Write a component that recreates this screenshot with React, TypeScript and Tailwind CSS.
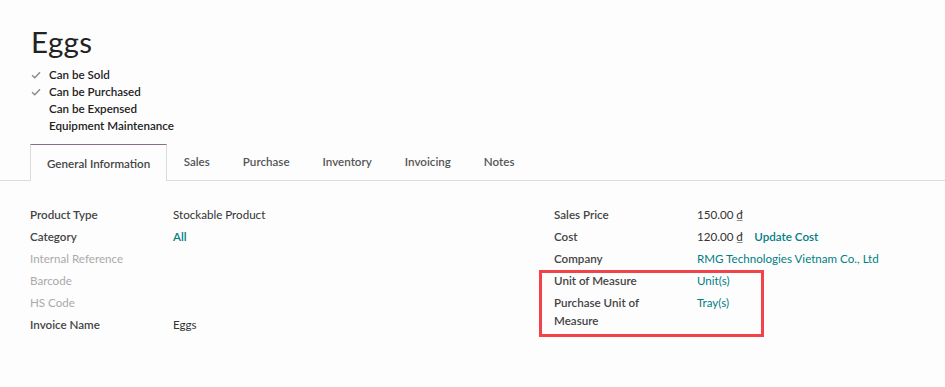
import React from "react";

const Check = () => (
  <svg width="10" height="8" viewBox="0 0 10 8" className="shrink-0">
    <path d="M1 4.2 L3.8 6.8 L9 1.2" fill="none" stroke="#8a8a8a" strokeWidth="1.4" />
  </svg>
);

const Row = ({ label, children, muted, tall }: { label: React.ReactNode; children?: React.ReactNode; muted?: boolean; tall?: boolean }) => (
  <div className={`flex ${tall ? "min-h-[40px]" : "h-[22px]"} items-start`}>
    <div className={`w-[143px] pt-[3px] leading-[18px] ${muted ? "text-[#aaaaaa]" : "text-[#444444] font-semibold"}`}>{label}</div>
    <div className="pt-[3px] leading-[18px] flex-1">{children}</div>
  </div>
);

export default function App() {
  const tabs = ["Sales", "Purchase", "Inventory", "Invoicing", "Notes"];
  return (
    <div className="w-[945px] h-[387px] bg-[#fdfdfd] text-[11.6px] text-[#333333] overflow-hidden" style={{ fontFamily: "Lato, 'Open Sans', sans-serif" }}>
      <div className="pl-[31px] pt-[24px]">
        <h1 className="text-[29.5px] leading-[36px] text-[#222222] font-normal tracking-[0.3px]">Eggs</h1>
        <div className="mt-[6px] flex flex-col">
          {[
            ["Can be Sold", true],
            ["Can be Purchased", true],
            ["Can be Expensed", false],
            ["Equipment Maintenance", false],
          ].map(([t, c]) => (
            <div key={t as string} className="flex items-center h-[17px]">
              <div className="w-[18px] flex items-center">{c ? <Check /> : null}</div>
              <span className="font-semibold text-[#222222]">{t as string}</span>
            </div>
          ))}
        </div>
      </div>
      <div className="mt-[10px] flex border-b border-[#dcdcdc] pl-[30px] h-[37px]">
        <div className="border border-b-0 border-[#dcdcdc] border-t-[#8d6a86] bg-[#fdfdfd] px-[16px] h-[37px] pt-px flex items-center text-[#444444] font-semibold -mb-px">
          General Information
        </div>
        {tabs.map((t) => (
          <div key={t} className="px-[16.5px] h-[36px] flex items-center text-[#555555] font-semibold">
            {t}
          </div>
        ))}
      </div>
      <div className="flex pt-[22px]">
        <div className="pl-[30px] w-[524px]">
          <Row label="Product Type">Stockable Product</Row>
          <Row label="Category"><span className="text-[#017e84] font-semibold">All</span></Row>
          <Row label="Internal Reference" muted />
          <Row label="Barcode" muted />
          <Row label="HS Code" muted />
          <Row label="Invoice Name">Eggs</Row>
        </div>
        <div className="flex-1 pl-[30px]">
          <Row label="Sales Price">150.00 ₫</Row>
          <Row label="Cost">
            <span>120.00 ₫</span>
            <span className="ml-[11px] text-[#017e84] font-semibold">Update Cost</span>
          </Row>
          <Row label="Company"><span className="text-[#017e84]">RMG Technologies Vietnam Co., Ltd</span></Row>
          <div className="relative">
            <div className="absolute left-[-15px] top-[1px] w-[225px] h-[67px] border-[3px] border-[#f2434b]" />
            <Row label="Unit of Measure"><span className="text-[#017e84]">Unit(s)</span></Row>
            <Row label={<span>Purchase Unit of<br />Measure</span>} tall><span className="text-[#017e84]">Tray(s)</span></Row>
          </div>
        </div>
      </div>
    </div>
  );
}
